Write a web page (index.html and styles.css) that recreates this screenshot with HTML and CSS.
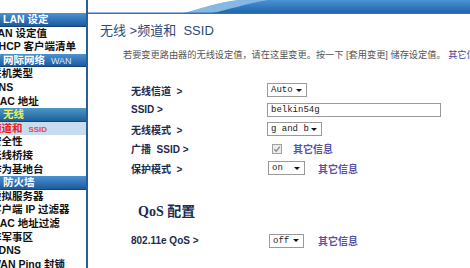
FILE: index.html
```html
<!DOCTYPE html>
<html>
<head>
<meta charset="utf-8">
<link rel="stylesheet" href="styles.css">
</head>
<body>
<div class="page">
  <nav class="side">
    <div class="side-top"></div>
    <div class="sec">LAN 设定</div>
    <div class="item">LAN 设定值</div>
    <div class="item">DHCP 客户端清单</div>
    <div class="sec">网际网络 <span class="sm">WAN</span></div>
    <div class="item">联机类型</div>
    <div class="item">DNS</div>
    <div class="item">MAC 地址</div>
    <div class="sec sec-on">无线</div>
    <div class="item item-on">频道和 <span class="sm">SSID</span></div>
    <div class="item">安全性</div>
    <div class="item">无线桥接</div>
    <div class="item">作为基地台</div>
    <div class="sec">防火墙</div>
    <div class="item">虚拟服务器</div>
    <div class="item">客户端 IP 过滤器</div>
    <div class="item">MAC 地址过滤</div>
    <div class="item">非军事区</div>
    <div class="item">DDNS</div>
    <div class="item">WAN Ping 封锁</div>
  </nav>
  <main class="main">
    <div class="banner">
      <svg width="382" height="15" viewBox="0 0 382 15">
        <defs>
          <linearGradient id="bg" x1="0" y1="0" x2="0" y2="1">
            <stop offset="0" stop-color="#4b93d4"/>
            <stop offset="1" stop-color="#1f63ad"/>
          </linearGradient>
        </defs>
        <rect width="382" height="13" fill="url(#bg)"/>
        <path d="M96 13 C112 9 126 3 150 0 H180 C156 4 140 10 124 13 Z" fill="#86b8e4"/>
        <path d="M0 0 H150 C126 3 112 9 96 13 H0 Z" fill="#ffffff"/>
        <rect y="12.5" width="382" height="1.5" fill="#3571b6"/>
      </svg>
    </div>
    <h1 class="title">无线 &gt;频道和&nbsp; SSID</h1>
    <p class="desc">若要变更路由器的无线设定值，请在这里变更。按一下 [套用变更] 储存设定值。 <span class="more-txt">其它信息</span></p>
    <div class="form">
      <div class="row">
        <span class="lbl">无线信道 &nbsp;&gt;</span>
        <span class="sel sel-auto">Auto<span class="arr"></span></span>
      </div>
      <div class="row">
        <span class="lbl">SSID &gt;</span>
        <span class="inp">belkin54g</span>
      </div>
      <div class="row">
        <span class="lbl">无线模式 &nbsp;&gt;</span>
        <span class="sel sel-gb">g and b<span class="arr"></span></span>
      </div>
      <div class="row">
        <span class="lbl">广播 &nbsp;SSID &gt;</span>
        <span class="chk">
          <svg width="10" height="10" viewBox="0 0 10 10"><rect x="0.5" y="0.5" width="9" height="9" fill="#ececec" stroke="#a0a0a0"/><path d="M2.3 5.2 L4.2 7.2 L7.8 2.6" fill="none" stroke="#8a8a8a" stroke-width="1.3"/></svg>
        </span>
        <span class="more more-chk">其它信息</span>
      </div>
      <div class="row">
        <span class="lbl">保护模式 &nbsp;&gt;</span>
        <span class="sel sel-on">on<span class="arr"></span></span>
        <span class="more">其它信息</span>
      </div>
    </div>
    <h2 class="qos">QoS 配置</h2>
    <div class="form form-qos">
      <div class="row">
        <span class="lbl">802.11e QoS &gt;</span>
        <span class="sel sel-off">off<span class="arr"></span></span>
        <span class="more more-off">其它信息</span>
      </div>
    </div>
  </main>
</div>
</body>
</html>
```

FILE: styles.css
```css
html, body {
  margin: 0;
  padding: 0;
  background: #ffffff;
}
body {
  width: 470px;
  height: 268px;
  overflow: hidden;
  font-family: "Liberation Sans", "Noto Sans CJK SC", sans-serif;
}
.page {
  display: flex;
  height: 268px;
}
.side {
  width: 86px;
  flex: none;
  border-right: 2px solid #2b5c9c;
  overflow: hidden;
  display: flex;
  flex-direction: column;
}
.side-top {
  height: 13px;
  flex: none;
}
.sec, .item {
  flex: none;
  height: 13.6px;
  line-height: 13.6px;
  font-size: 10.5px;
  font-weight: 700;
  white-space: nowrap;
}
.sec {
  background: linear-gradient(#4c92d2, #1c5aa0);
  color: #ffffff;
  padding-left: 3px;
  border-bottom: 1px solid #16457e;
  box-sizing: border-box;
}
.sec-on {
  color: #eef24a;
  background: linear-gradient(#4b98c8, #1f6098);
}
.sec .sm {
  font-size: 9px;
  font-weight: 400;
  color: #dce9f7;
  margin-left: 3px;
}
.item {
  color: #111111;
  text-indent: -9px;
  background: #ffffff;
}
.item-on {
  background: #c9dcef;
  color: #e2231f;
}
.item-on .sm {
  font-size: 8px;
  color: #e24a44;
  margin-left: 3px;
}
.main {
  flex: 1;
  min-width: 0;
  overflow: hidden;
}
.banner {
  height: 15px;
}
.banner svg {
  display: block;
}
.title {
  margin: 8px 0 0 12px;
  font-size: 13px;
  line-height: 16px;
  font-weight: 400;
  color: #2a4a7c;
  white-space: nowrap;
}
.desc {
  margin: 10px 0 0 35px;
  font-size: 9.2px;
  line-height: 12px;
  color: #555555;
  white-space: nowrap;
}
.more-txt {
  color: #4b40a0;
}
.form {
  margin-top: 19.5px;
  padding-left: 43px;
}
.row {
  display: flex;
  align-items: center;
  height: 19.5px;
}
.lbl {
  width: 136px;
  flex: none;
  font-size: 10px;
  font-weight: 700;
  color: #1c2b4f;
  white-space: nowrap;
}
.sel, .inp {
  display: inline-flex;
  align-items: center;
  box-sizing: border-box;
  height: 14px;
  border: 1px solid #9a9a9a;
  background: #ffffff;
  font-family: "Liberation Mono", monospace;
  font-size: 9px;
  color: #222222;
  padding-left: 3px;
  white-space: pre;
}
.sel {
  justify-content: space-between;
  padding-right: 4px;
}
.arr {
  width: 0;
  height: 0;
  border-left: 3px solid transparent;
  border-right: 3px solid transparent;
  border-top: 3.5px solid #111111;
}
.sel-auto { width: 40px; }
.sel-gb { width: 55px; }
.sel-on { width: 37px; margin-left: 1px; }
.sel-off { width: 35px; margin-left: 2px; }
.inp { width: 174px; }
.chk {
  display: inline-flex;
  margin-left: 5px;
}
.chk svg { display: block; }
.more {
  font-size: 10px;
  font-weight: 700;
  color: #5a52a8;
  margin-left: 13px;
  white-space: nowrap;
}
.more-chk { margin-left: 11px; }
.more-off { margin-left: 14px; }
.qos {
  margin: 25px 0 0 50px;
  font-family: "Liberation Serif", "Noto Sans CJK SC", serif;
  font-size: 14px;
  line-height: 18px;
  font-weight: 700;
  color: #1c2b4f;
}
.form-qos {
  margin-top: 10px;
}
```
